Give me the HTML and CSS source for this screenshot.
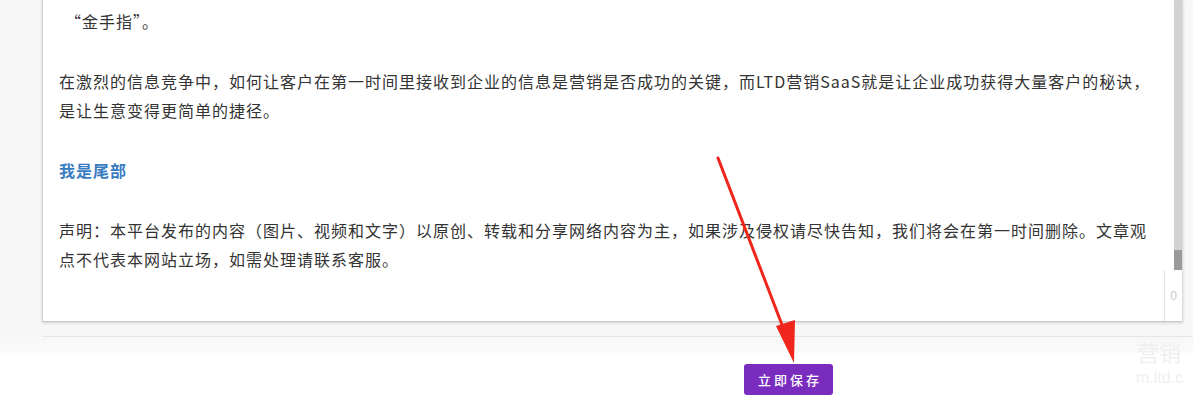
FILE: index.html
```html
<!DOCTYPE html>
<html lang="zh-CN">
<head>
  <meta charset="UTF-8" />
  <meta name="viewport" content="width=device-width, initial-scale=1.0"/>
  <title>编辑文章</title>
  <link rel="stylesheet" href="styles.css">
</head>
<body>
  <div class="page">
    <div class="editor">
      <div class="editor-body">
        <p class="quote">“金手指”。</p>
        <p>在激烈的信息竞争中，如何让客户在第一时间里接收到企业的信息是营销是否成功的关键，而LTD营销SaaS就是让企业成功获得大量客户的秘诀，是让生意变得更简单的捷径。</p>
        <p class="heading">我是尾部</p>
        <p>声明：本平台发布的内容（图片、视频和文字）以原创、转载和分享网络内容为主，如果涉及侵权请尽快告知，我们将会在第一时间删除。文章观点不代表本网站立场，如需处理请联系客服。</p>
      </div>
      <div class="side">
        <div class="scrollbar">
          <div class="thumb"></div>
        </div>
        <div class="counter">0</div>
      </div>
    </div>
    <div class="divider"></div>
  </div>

  <div class="footer">
    <button class="save-btn" type="button">立即保存</button>
  </div>

  <div class="watermark">
    <span class="wm-big">营销</span>
    <span class="wm-small">m.ltd.c</span>
  </div>

  <!-- annotation arrow -->
  <svg class="arrow" width="1193" height="400" viewBox="0 0 1193 400">
    <line x1="718" y1="158" x2="784" y2="330" stroke="#f0251b" stroke-width="3" stroke-linecap="round"/>
    <polygon points="794,363 776,326 795,320" fill="#f0251b"/>
  </svg>
</body>
</html>
```

FILE: styles.css
```css
body {
  margin: 0;
  background-color: #fff;
  font-family: "Microsoft YaHei", "Noto Sans CJK SC", "Noto Sans", sans-serif;
  color: #333;
  position: relative;
  height: 400px;
  overflow: hidden;
}

.page {
  background: linear-gradient(to bottom, #f7f7f7 0, #f7f7f7 335px, #fbfbfb 353px);
  height: 353px;
  padding-left: 42px;
  box-sizing: border-box;
}

.editor {
  display: flex;
  width: 1141px;
  height: 322px;
  background-color: #fff;
  border-left: 1px solid #cfcfcf;
  border-right: 1px solid #dcdcdc;
  border-bottom: 1px solid #c8c8c8;
  box-shadow: 0 1px 3px rgba(0, 0, 0, 0.15);
  box-sizing: border-box;
}

.editor-body {
  flex: 1;
  padding: 7px 12px 0 16px;
}

.editor-body p {
  margin: 0 0 31px 0;
  font-size: 16px;
  line-height: 29px;
  letter-spacing: 1px;
}

.editor-body .quote {
  padding-left: 6px;
}

.editor-body .heading {
  color: #3a7cc2;
  font-weight: bold;
}

.side {
  width: 18px;
  display: flex;
  flex-direction: column;
  align-items: flex-end;
}

.scrollbar {
  width: 8px;
  flex: 1;
  background-color: #d2d2d2;
  display: flex;
  flex-direction: column;
  justify-content: flex-end;
}

.thumb {
  height: 20px;
  background-color: #9a9a9a;
}

.counter {
  width: 18px;
  height: 51px;
  border-left: 1px solid #e2e2e2;
  box-sizing: border-box;
  color: #c9c9c9;
  font-size: 12px;
  font-family: "Liberation Sans", Arial, sans-serif;
  display: flex;
  align-items: center;
  justify-content: center;
}

.divider {
  height: 1px;
  background-color: #e6e6e6;
  margin-top: 14px;
}

.footer {
  display: flex;
  justify-content: center;
  padding: 11px 0 0 384px;
}

.save-btn {
  width: 89px;
  height: 31px;
  background-color: #7a2cbf;
  color: #fff;
  border: none;
  border-radius: 3px;
  font-family: "Microsoft YaHei", "Noto Sans CJK SC", sans-serif;
  font-size: 13px;
  font-weight: 500;
  letter-spacing: 3px;
  padding: 0 0 0 3px;
  cursor: pointer;
}

.watermark {
  position: absolute;
  right: 12px;
  top: 336px;
  display: flex;
  flex-direction: column;
  align-items: flex-end;
  color: #efefef;
  pointer-events: none;
}

.wm-big {
  font-size: 22px;
  line-height: 30px;
}

.wm-small {
  font-size: 16px;
  line-height: 24px;
  font-family: "Liberation Sans", Arial, sans-serif;
  margin-right: -2px;
}

.arrow {
  position: absolute;
  left: 0;
  top: 0;
  pointer-events: none;
}
```
